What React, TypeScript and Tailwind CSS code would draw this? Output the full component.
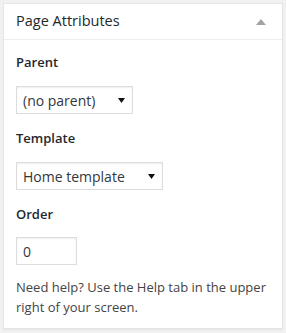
function Caret() {
  return (
    <svg width="7" height="5" viewBox="0 0 7 5" className="shrink-0">
      <path d="M0 0h7L3.5 5z" fill="#111" />
    </svg>
  );
}

function FakeSelect({ value, width }: { value: string; width: string }) {
  return (
    <div
      className={`${width} h-[28px] flex items-center justify-between border border-[#ddd] bg-white pl-[6px] pr-[7px] text-[14px] text-[#32373c] shadow-[inset_0_1px_2px_rgba(0,0,0,0.07)]`}
    >
      <span>{value}</span>
      <Caret />
    </div>
  );
}

export default function App() {
  return (
    <div
      className="w-[286px] h-[333px] bg-[#f1f1f1] p-[3px]"
      style={{ fontFamily: '"Open Sans", "Noto Sans", sans-serif' }}
    >
      <div className="w-[280px] h-[326px] bg-white border border-[#e5e5e5] shadow-[0_1px_1px_rgba(0,0,0,0.04)]">
        <div className="h-[36px] flex items-center justify-between px-3 border-b border-[#eee]">
          <h2 className="text-[14.5px] text-[#23282d] leading-none">Page Attributes</h2>
          <svg width="10" height="6" viewBox="0 0 10 6" className="mr-[4px]">
            <path d="M0 6L5 0l5 6z" fill="#a0a5aa" />
          </svg>
        </div>

        <div className="px-3 pt-[12px] text-[13px] text-[#444]">
          <p className="font-semibold text-[#23282d] leading-[20px]">Parent</p>
          <div className="mt-[14px]">
            <FakeSelect value="(no parent)" width="w-[117px]" />
          </div>

          <p className="mt-[14px] font-semibold text-[#23282d] leading-[20px]">Template</p>
          <div className="mt-[14px]">
            <FakeSelect value="Home template" width="w-[147px]" />
          </div>

          <p className="mt-[14px] font-semibold text-[#23282d] leading-[20px]">Order</p>
          <div className="mt-[13px] w-[61px] h-[28px] flex items-center border border-[#ddd] pl-[6px] text-[14px] text-[#32373c] shadow-[inset_0_1px_2px_rgba(0,0,0,0.07)]">
            0
          </div>

          <p className="mt-[12px] leading-[20px]">
            Need help? Use the Help tab in the upper right of your screen.
          </p>
        </div>
      </div>
    </div>
  );
}
